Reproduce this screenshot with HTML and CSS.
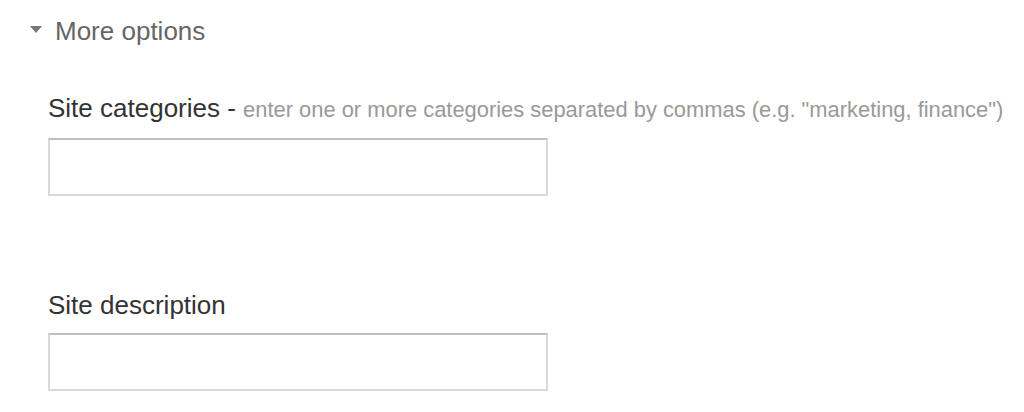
FILE: index.html
```html
<!DOCTYPE html>
<html>
<head>
<meta charset="utf-8">
<link rel="stylesheet" href="styles.css">
</head>
<body>
<div class="page">
  <div class="toggle">
    <svg class="caret" width="12" height="8" viewBox="0 0 12 8"><path d="M0 0 H12 L6 7 Z" fill="#777"/></svg>
    <span class="toggle-text">More options</span>
  </div>
  <div class="options">
    <div class="field">
      <label class="label">Site categories <span class="hint">- <span class="hint-text">enter one or more categories separated by commas (e.g. "marketing, finance")</span></span></label>
      <input class="input" type="text">
    </div>
    <div class="field field-second">
      <label class="label">Site description</label>
      <input class="input" type="text">
    </div>
  </div>
</div>
</body>
</html>
```
FILE: styles.css
```css
html, body {
  margin: 0;
  padding: 0;
  background: #fff;
}
.page {
  font-family: "Liberation Sans", Arial, sans-serif;
  padding: 12px 0 0 30px;
}
.toggle {
  display: flex;
  align-items: center;
  gap: 13px;
  height: 38px;
  color: #666;
  font-size: 26px;
}
.caret {
  display: block;
  margin-top: -2px;
}
.options {
  padding-left: 18px;
  padding-top: 43px;
}
.field {
  display: flex;
  flex-direction: column;
  align-items: flex-start;
}
.field-second {
  margin-top: 94px;
}
.label {
  font-size: 26px;
  color: #333;
  line-height: 30px;
  white-space: nowrap;
}
.hint {
  color: #333;
}
.hint-text {
  font-size: 21.9px;
  color: #999;
}
.input {
  margin: 13px 0 0 0;
  box-sizing: border-box;
  width: 500px;
  height: 58px;
  border: 2px solid #d9d9d9;
  border-top-color: #c0c0c0;
  background: #fff;
  padding: 0 8px;
  font-size: 20px;
  outline: none;
}
```
